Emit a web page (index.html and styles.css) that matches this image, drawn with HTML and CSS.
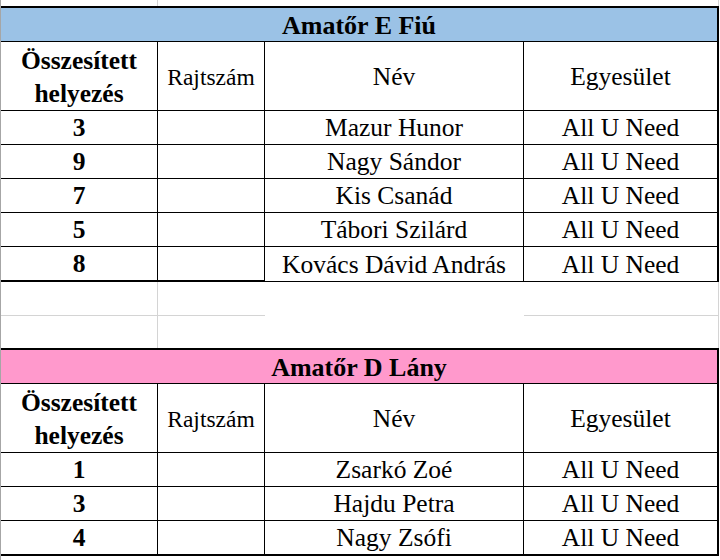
FILE: index.html
```html
<!DOCTYPE html>
<html>
<head>
<meta charset="utf-8">
<link rel="stylesheet" href="styles.css">
</head>
<body>
<div class="sheet">
  <div class="row strip">
    <div class="gc gr"></div><div class="gc"></div><div class="gc"></div><div class="gc gr"></div>
  </div>

  <table class="tbl">
    <colgroup>
      <col class="w1"><col class="w2"><col class="w3"><col class="w4">
    </colgroup>
    <tr class="title-row"><td class="title blue" colspan="4">Amatőr E Fiú</td></tr>
    <tr class="head">
      <td class="b two">Összesített<br>helyezés</td>
      <td class="small">Rajtszám</td>
      <td>Név</td>
      <td class="lc">Egyesület</td>
    </tr>
    <tr class="data"><td class="b">3</td><td></td><td>Mazur Hunor</td><td class="lc">All U Need</td></tr>
    <tr class="data"><td class="b">9</td><td></td><td>Nagy Sándor</td><td class="lc">All U Need</td></tr>
    <tr class="data"><td class="b">7</td><td></td><td>Kis Csanád</td><td class="lc">All U Need</td></tr>
    <tr class="data"><td class="b">5</td><td></td><td>Tábori Szilárd</td><td class="lc">All U Need</td></tr>
    <tr class="data final"><td class="b thick">8</td><td class="thick"></td><td>Kovács Dávid András</td><td class="lc">All U Need</td></tr>
  </table>

  <div class="row empty first">
    <div class="gc gr gb"></div><div class="gc gb"></div><div class="gc"></div><div class="gc gr gb"></div>
  </div>
  <div class="row empty second">
    <div class="gc gr"></div><div class="gc"></div><div class="gc"></div><div class="gc gr"></div>
  </div>

  <table class="tbl">
    <colgroup>
      <col class="w1"><col class="w2"><col class="w3"><col class="w4">
    </colgroup>
    <tr class="title-row"><td class="title pink" colspan="4">Amatőr D Lány</td></tr>
    <tr class="head">
      <td class="b two">Összesített<br>helyezés</td>
      <td class="small">Rajtszám</td>
      <td>Név</td>
      <td class="lc">Egyesület</td>
    </tr>
    <tr class="data"><td class="b">1</td><td></td><td>Zsarkó Zoé</td><td class="lc">All U Need</td></tr>
    <tr class="data"><td class="b">3</td><td></td><td>Hajdu Petra</td><td class="lc">All U Need</td></tr>
    <tr class="data final"><td class="b thick">4</td><td class="thick"></td><td class="thick">Nagy Zsófi</td><td class="lc thick">All U Need</td></tr>
  </table>
</div>
</body>
</html>
```

FILE: styles.css
```css
html, body {
  margin: 0;
  padding: 0;
  background: #ffffff;
  font-family: "Liberation Serif", "Times New Roman", serif;
}

.sheet {
  width: 720px;
  height: 560px;
  box-sizing: border-box;
  border-left: 1px solid #a6a6a6;
  color: #000;
  overflow: hidden;
}

/* spreadsheet background gridlines */
.row {
  display: grid;
  grid-template-columns: 157px 107px 259px 195px;
  width: 718px;
}
.gc { box-sizing: border-box; }
.strip { height: 6px; }
.gr { border-right: 1px solid #d4d4d4; }
.gb { border-bottom: 1px solid #d4d4d4; }
.empty.first { height: 34px; }
.empty.second { height: 32px; }

/* tables */
.tbl {
  width: 718px;
  table-layout: fixed;
  border-collapse: separate;
  border-spacing: 0;
  font-family: "Liberation Serif", "Times New Roman", serif;
  font-size: 25.5px;
}
.w1 { width: 157px; }
.w2 { width: 107px; }
.w3 { width: 259px; }
.w4 { width: 195px; }

.tbl td {
  padding: 1px 0 0 0;
  text-align: center;
  vertical-align: middle;
  white-space: nowrap;
  font-family: "Liberation Serif", "Times New Roman", serif;
  border-right: 1px solid #000;
  border-bottom: 1px solid #000;
}
.tbl td.lc { border-right: 2px solid #000; }
.tbl td.thick { border-bottom: 2px solid #000; }

.title-row { height: 36px; }
.tbl td.title {
  border-top: 2px solid #000;
  border-right: 2px solid #000;
  border-bottom: 1px solid #000;
  padding-top: 3px;
  font-weight: bold;
  font-size: 26px;
  line-height: 28px;
}
.blue { background: #9bc2e6; }
.pink { background: #ff99cc; }

.head { height: 69px; }
.head td { padding-top: 2px; }
.tbl td.two {
  padding-top: 1px;
  line-height: 33px;
}
.data { height: 34px; }
.data.final { height: 35px; }

.b { font-weight: bold; }
.tbl td.small { font-size: 23.5px; }
```
